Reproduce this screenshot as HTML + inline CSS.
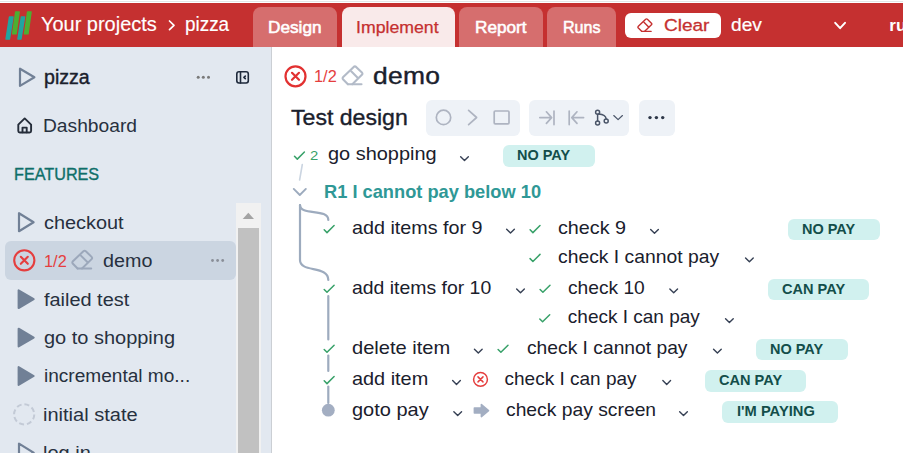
<!DOCTYPE html>
<html lang="en">
<head>
<meta charset="utf-8">
<title>pizza - demo</title>
<style>
html,body{margin:0;padding:0;background:#fff;}
#app{position:relative;width:903px;height:453px;overflow:hidden;background:#fff;font-family:"Liberation Sans",sans-serif;}
.t{position:absolute;white-space:pre;transform-origin:0 0;}
.b{position:absolute;box-sizing:border-box;}
#ico{position:absolute;left:0;top:0;}
.badge{background:#d1f1ef;border-radius:6px;}
.tool{background:#eef2f7;border-radius:6px;}
.tab{border-radius:8px 8px 0 0;background:#d66e6e;}

</style>
</head>
<body>
<div id="app">
<div class="b " style="left:0.00px;top:1.00px;width:903.00px;height:1.00px;background:#e3e6e6;"></div>
<div class="b " style="left:0.00px;top:3.00px;width:903.00px;height:43.60px;background:#c53030;"></div>
<div class="b tab" style="left:252.80px;top:6.80px;width:84.20px;height:39.80px;"></div>
<div class="b tab" style="left:342.00px;top:6.80px;width:113.00px;height:39.80px;background:#f9eaea;"></div>
<div class="b tab" style="left:459.00px;top:6.80px;width:84.00px;height:39.80px;"></div>
<div class="b tab" style="left:547.00px;top:6.80px;width:69.00px;height:39.80px;"></div>
<div class="b " style="left:625.00px;top:13.20px;width:96.00px;height:24.50px;background:#fff;border-radius:6px;"></div>
<div class="b " style="left:0.00px;top:46.60px;width:272.00px;height:406.40px;background:#e2e8f0;border-right:1px solid #cbcfd4;"></div>
<div class="b " style="left:5.00px;top:240.80px;width:231.00px;height:39.20px;background:#cbd5e1;border-radius:6px;"></div>
<div class="b " style="left:235.80px;top:203.00px;width:25.20px;height:250.00px;background:#f1f1f1;"></div>
<div class="b " style="left:238.00px;top:228.00px;width:21.00px;height:225.00px;background:#c1c1c1;"></div>
<div class="b tool" style="left:425.50px;top:100.00px;width:94.50px;height:35.60px;"></div>
<div class="b tool" style="left:529.00px;top:100.00px;width:99.80px;height:35.60px;"></div>
<div class="b tool" style="left:639.00px;top:100.00px;width:35.70px;height:35.60px;"></div>
<div class="b badge" style="left:502.90px;top:145.10px;width:92.20px;height:21.80px;"></div>
<div class="b badge" style="left:787.90px;top:219.10px;width:92.20px;height:20.70px;"></div>
<div class="b badge" style="left:768.00px;top:278.90px;width:101.20px;height:21.00px;"></div>
<div class="b badge" style="left:755.90px;top:339.10px;width:92.20px;height:20.70px;"></div>
<div class="b badge" style="left:704.90px;top:370.00px;width:101.00px;height:21.90px;"></div>
<div class="b badge" style="left:722.20px;top:401.00px;width:115.90px;height:21.60px;"></div>
<svg id="ico" width="903" height="453" viewBox="0 0 903 453">
<polygon points="242.7,219 254,219 248.35,212.8" fill="#a3a3a3"/>
<polygon points="9.50,16.90 13.00,16.90 9.50,39.00 6.00,39.00" fill="#20a5a0" stroke="#20a5a0" stroke-width="1.4" stroke-linejoin="round"/>
<polygon points="15.70,11.90 19.20,11.90 16.10,33.90 12.60,33.90" fill="#4caf32" stroke="#4caf32" stroke-width="1.4" stroke-linejoin="round"/>
<polygon points="21.40,16.90 24.60,16.90 21.00,39.00 17.90,39.00" fill="#20a5a0" stroke="#20a5a0" stroke-width="1.4" stroke-linejoin="round"/>
<polygon points="27.60,11.90 31.10,11.90 28.00,33.90 24.50,33.90" fill="#4caf32" stroke="#4caf32" stroke-width="1.4" stroke-linejoin="round"/>
<polyline points="169.5,21 174,25.3 169.5,29.6" stroke="#fff" stroke-width="1.7" fill="none" stroke-linecap="round" stroke-linejoin="round"/>
<g transform="translate(637.50,17.90) scale(0.7)" stroke="#c53030" stroke-width="2.00" fill="none" stroke-linecap="round" stroke-linejoin="round"><path d="M5.9 19.2 L1.2 14.4 Q0 13.2 1.2 12 L11.7 1.9 Q12.9 0.9 14.1 1.9 L19.9 7.6 Q21 8.7 19.9 9.8 L10.3 19.2"/><path d="M5.9 19.2 H19.5"/><path d="M9.2 6.3 L15.9 12.9"/></g>
<polyline points="835.2,22.8 840.1,28.2 845,22.8" stroke="#fff" stroke-width="2" fill="none" stroke-linecap="round" stroke-linejoin="round"/>
<polygon points="20.00,68.70 20.00,85.90 34.40,77.30" fill="none" stroke="#718096" stroke-width="2.2" stroke-linejoin="round"/>
<circle cx="198.2" cy="77.2" r="1.5" fill="#7a7a7a"/><circle cx="203.3" cy="77.2" r="1.5" fill="#7a7a7a"/><circle cx="208.5" cy="77.2" r="1.5" fill="#7a7a7a"/>
<g stroke="#1e293b" stroke-width="1.6" fill="none" stroke-linecap="round" stroke-linejoin="round"><rect x="236.8" y="71.8" width="11.5" height="11.2" rx="2.2"/><path d="M240.5 71.8 V83"/><path d="M245.3 76.1 L243.9 77.4 L245.3 78.7"/></g>
<g stroke="#252d3a" stroke-width="1.9" fill="none" stroke-linecap="round" stroke-linejoin="round"><path d="M18.3 124.6 L24.7 118.4 L31.1 124.6 V131 Q31.1 132.5 29.6 132.5 H19.8 Q18.3 132.5 18.3 131 Z"/><path d="M22.5 132.3 V127.6 H26.7 V132.3"/></g>
<polygon points="19.00,213.25 19.00,231.25 33.60,222.25" fill="none" stroke="#718096" stroke-width="2.2" stroke-linejoin="round"/>
<g stroke="#e53e3e" stroke-width="2.1" fill="none" stroke-linecap="round"><circle cx="24.3" cy="260.3" r="10.1"/><path d="M20.8 256.8 L27.8 263.8 M27.8 256.8 L20.8 263.8"/></g>
<g transform="translate(71.70,249.30) scale(1.0)" stroke="#9ca8bb" stroke-width="2.00" fill="none" stroke-linecap="round" stroke-linejoin="round"><path d="M5.9 19.2 L1.2 14.4 Q0 13.2 1.2 12 L11.7 1.9 Q12.9 0.9 14.1 1.9 L19.9 7.6 Q21 8.7 19.9 9.8 L10.3 19.2"/><path d="M5.9 19.2 H19.5"/><path d="M9.2 6.3 L15.9 12.9"/></g>
<circle cx="212.5" cy="260.5" r="1.4" fill="#8a8f98"/><circle cx="217.6" cy="260.5" r="1.4" fill="#8a8f98"/><circle cx="222.7" cy="260.5" r="1.4" fill="#8a8f98"/>
<polygon points="18.60,290.30 18.60,308.10 33.70,299.20" fill="#718096" stroke="#718096" stroke-width="2" stroke-linejoin="round"/>
<polygon points="18.60,328.70 18.60,346.50 33.70,337.60" fill="#718096" stroke="#718096" stroke-width="2" stroke-linejoin="round"/>
<polygon points="18.60,367.10 18.60,384.90 33.70,376.00" fill="#718096" stroke="#718096" stroke-width="2" stroke-linejoin="round"/>
<circle cx="24.15" cy="414.4" r="10.1" fill="none" stroke="#c3cad6" stroke-width="2" stroke-dasharray="5 2.93"/>
<polygon points="19.00,443.65 19.00,461.65 33.60,452.65" fill="none" stroke="#718096" stroke-width="2.2" stroke-linejoin="round"/>
<g stroke="#e23131" stroke-width="2.2" fill="none" stroke-linecap="round"><circle cx="295.5" cy="76.3" r="10"/><path d="M292.0 72.8 L299.0 79.8 M299.0 72.8 L292.0 79.8"/></g>
<g transform="translate(342.00,65.00) scale(1.0)" stroke="#b3bbc8" stroke-width="2.10" fill="none" stroke-linecap="round" stroke-linejoin="round"><path d="M5.9 19.2 L1.2 14.4 Q0 13.2 1.2 12 L11.7 1.9 Q12.9 0.9 14.1 1.9 L19.9 7.6 Q21 8.7 19.9 9.8 L10.3 19.2"/><path d="M5.9 19.2 H19.5"/><path d="M9.2 6.3 L15.9 12.9"/></g>
<g stroke="#aeb4c1" stroke-width="1.7" fill="none" stroke-linecap="round" stroke-linejoin="round"><circle cx="443.5" cy="117.4" r="7.2"/><polyline points="468.6,110.4 476.6,117.5 468.6,124.6"/><rect x="494.2" y="111" width="14.8" height="12.8" rx="1"/><path d="M539.8 117.6 H551.4 M546.4 111.8 L551.6 117.6 L546.4 123.4 M554 111 V124.6"/><path d="M583.6 117.6 H572 M577 111.8 L571.8 117.6 L577 123.4 M569.2 111 V124.6"/></g>
<g stroke="#4a5568" stroke-width="1.5" fill="none" stroke-linecap="round" stroke-linejoin="round"><circle cx="597.6" cy="112.3" r="2"/><circle cx="597.6" cy="123" r="2"/><circle cx="606.2" cy="121" r="2"/><path d="M597.6 114.3 V121 M598.6 114 Q605.8 114.5 606.2 119"/></g>
<polyline points="613.75,115.55 618.10,119.60 622.45,115.55" stroke="#4a5568" stroke-width="1.2" fill="none" stroke-linecap="round" stroke-linejoin="round"/>
<circle cx="650" cy="117.6" r="1.7" fill="#2d3748"/><circle cx="656.4" cy="117.6" r="1.7" fill="#2d3748"/><circle cx="662.7" cy="117.6" r="1.7" fill="#2d3748"/>
<polyline points="294.50,156.25 297.30,159.10 304.40,152.00" stroke="#38a169" stroke-width="1.5" fill="none" stroke-linecap="round" stroke-linejoin="round"/>
<polyline points="460.65,156.75 464.50,160.60 468.35,156.75" stroke="#364054" stroke-width="1.4" fill="none" stroke-linecap="round" stroke-linejoin="round"/>
<path d="M302.3 164.5 L299.6 180" stroke="#cbd5e1" stroke-width="1.6" fill="none" stroke-linecap="round"/>
<polyline points="293.75,188.95 299.80,195.00 305.85,188.95" stroke="#9dabbe" stroke-width="1.9" fill="none" stroke-linecap="round" stroke-linejoin="round"/>
<g stroke="#9dabbe" stroke-width="2.2" fill="none" stroke-linecap="round" stroke-linejoin="round"><path d="M300 205 V260 C300 273 328.3 265 328.3 280"/><path d="M300 205 C300 216 328.3 208 328.3 220"/><path d="M328.3 296 V339.5"/><path d="M328.3 355.5 V371"/><path d="M328.3 386.5 V403"/></g>
<circle cx="328.3" cy="410.2" r="6.4" fill="#a3aec2"/>
<polyline points="324.20,229.75 327.00,232.60 334.10,225.50" stroke="#38a169" stroke-width="1.5" fill="none" stroke-linecap="round" stroke-linejoin="round"/>
<polyline points="506.65,229.25 510.50,233.10 514.35,229.25" stroke="#364054" stroke-width="1.4" fill="none" stroke-linecap="round" stroke-linejoin="round"/>
<polyline points="530.10,229.75 532.90,232.60 540.00,225.50" stroke="#38a169" stroke-width="1.5" fill="none" stroke-linecap="round" stroke-linejoin="round"/>
<polyline points="650.65,229.45 654.50,233.30 658.35,229.45" stroke="#364054" stroke-width="1.4" fill="none" stroke-linecap="round" stroke-linejoin="round"/>
<polyline points="530.10,258.65 532.90,261.50 540.00,254.40" stroke="#38a169" stroke-width="1.5" fill="none" stroke-linecap="round" stroke-linejoin="round"/>
<polyline points="745.55,257.95 749.40,261.80 753.25,257.95" stroke="#364054" stroke-width="1.4" fill="none" stroke-linecap="round" stroke-linejoin="round"/>
<polyline points="324.20,289.45 327.00,292.30 334.10,285.20" stroke="#38a169" stroke-width="1.5" fill="none" stroke-linecap="round" stroke-linejoin="round"/>
<polyline points="516.65,288.95 520.50,292.80 524.35,288.95" stroke="#364054" stroke-width="1.4" fill="none" stroke-linecap="round" stroke-linejoin="round"/>
<polyline points="540.10,289.45 542.90,292.30 550.00,285.20" stroke="#38a169" stroke-width="1.5" fill="none" stroke-linecap="round" stroke-linejoin="round"/>
<polyline points="669.85,288.95 673.70,292.80 677.55,288.95" stroke="#364054" stroke-width="1.4" fill="none" stroke-linecap="round" stroke-linejoin="round"/>
<polyline points="539.80,318.95 542.60,321.80 549.70,314.70" stroke="#38a169" stroke-width="1.5" fill="none" stroke-linecap="round" stroke-linejoin="round"/>
<polyline points="725.55,318.65 729.40,322.50 733.25,318.65" stroke="#364054" stroke-width="1.4" fill="none" stroke-linecap="round" stroke-linejoin="round"/>
<polyline points="324.20,349.45 327.00,352.30 334.10,345.20" stroke="#38a169" stroke-width="1.5" fill="none" stroke-linecap="round" stroke-linejoin="round"/>
<polyline points="474.45,349.25 478.30,353.10 482.15,349.25" stroke="#364054" stroke-width="1.4" fill="none" stroke-linecap="round" stroke-linejoin="round"/>
<polyline points="498.10,349.45 500.90,352.30 508.00,345.20" stroke="#38a169" stroke-width="1.5" fill="none" stroke-linecap="round" stroke-linejoin="round"/>
<polyline points="713.55,349.25 717.40,353.10 721.25,349.25" stroke="#364054" stroke-width="1.4" fill="none" stroke-linecap="round" stroke-linejoin="round"/>
<polyline points="324.20,380.75 327.00,383.60 334.10,376.50" stroke="#38a169" stroke-width="1.5" fill="none" stroke-linecap="round" stroke-linejoin="round"/>
<polyline points="452.65,380.55 456.50,384.40 460.35,380.55" stroke="#364054" stroke-width="1.4" fill="none" stroke-linecap="round" stroke-linejoin="round"/>
<g stroke="#e53e3e" stroke-width="1.5" fill="none" stroke-linecap="round"><circle cx="480.5" cy="379.4" r="6.9"/><path d="M478.0 376.9 L483.0 381.9 M483.0 376.9 L478.0 381.9"/></g>
<polyline points="662.85,380.55 666.70,384.40 670.55,380.55" stroke="#364054" stroke-width="1.4" fill="none" stroke-linecap="round" stroke-linejoin="round"/>
<polyline points="453.85,411.75 457.70,415.60 461.55,411.75" stroke="#364054" stroke-width="1.4" fill="none" stroke-linecap="round" stroke-linejoin="round"/>
<path d="M474.4 408.1 H481.4 V404.6 L488.5 410.6 L481.4 416.6 V413 H474.4 Z" fill="#a3aec2" stroke="#a3aec2" stroke-width="1.6" stroke-linejoin="round"/>
<polyline points="679.65,411.75 683.50,415.60 687.35,411.75" stroke="#364054" stroke-width="1.4" fill="none" stroke-linecap="round" stroke-linejoin="round"/>
</svg>
<!-- text -->
<span class="t" style="left:40.82px;top:13px;font-size:19.4px;line-height:23px;letter-spacing:0.000px;color:#fff;transform:scaleX(1.0290);-webkit-text-stroke:0.15px #fff;">Your projects</span>
<span class="t" style="left:184.98px;top:13px;font-size:19.4px;line-height:23px;letter-spacing:0.000px;color:#fff;transform:scaleX(0.9746);-webkit-text-stroke:0.15px #fff;">pizza</span>
<span class="t" style="left:268.37px;top:17px;font-size:16.3px;line-height:20px;letter-spacing:0.000px;color:#fff;transform:scaleX(1.0567);-webkit-text-stroke:0.55px #fff;">Design</span>
<span class="t" style="left:356.48px;top:17px;font-size:16.5px;line-height:20px;letter-spacing:-0.000px;color:#c53030;transform:scaleX(1.0726);-webkit-text-stroke:0.25px #c53030;">Implement</span>
<span class="t" style="left:474.86px;top:17px;font-size:16.3px;line-height:20px;letter-spacing:0.000px;color:#fff;transform:scaleX(1.0549);-webkit-text-stroke:0.55px #fff;">Report</span>
<span class="t" style="left:562.79px;top:17px;font-size:16.3px;line-height:20px;letter-spacing:0.000px;color:#fff;transform:scaleX(0.9849);-webkit-text-stroke:0.55px #fff;">Runs</span>
<span class="t" style="left:664.15px;top:15px;font-size:17.4px;line-height:21px;letter-spacing:0.000px;color:#c53030;transform:scaleX(1.0936);-webkit-text-stroke:0.3px #c53030;">Clear</span>
<span class="t" style="left:730.85px;top:14px;font-size:18px;line-height:22px;letter-spacing:0.000px;color:#fff;transform:scaleX(1.0644);-webkit-text-stroke:0.2px #fff;">dev</span>
<span class="t" style="left:889.37px;top:15px;font-size:17.2px;line-height:21px;letter-spacing:0.000px;color:#fff;font-weight:700;">ru</span>
<span class="t" style="left:43.52px;top:66px;font-size:19.5px;line-height:23px;letter-spacing:0.000px;color:#1a202c;transform:scaleX(1.0048);-webkit-text-stroke:0.4px #1a202c;">pizza</span>
<span class="t" style="left:43.04px;top:115px;font-size:18.7px;line-height:22px;letter-spacing:0.000px;color:#27303e;transform:scaleX(1.0277);">Dashboard</span>
<span class="t" style="left:14.33px;top:164px;font-size:16.5px;line-height:20px;letter-spacing:0.000px;color:#0f6f69;transform:scaleX(0.9814);-webkit-text-stroke:0.35px #0f6f69;">FEATURES</span>
<span class="t" style="left:44.18px;top:212px;font-size:18.7px;line-height:22px;letter-spacing:0.000px;color:#27303e;transform:scaleX(1.0644);">checkout</span>
<span class="t" style="left:44.19px;top:252px;font-size:16.6px;line-height:20px;letter-spacing:0.000px;color:#e53e3e;transform:scaleX(0.9858);">1/2</span>
<span class="t" style="left:102.89px;top:250px;font-size:18.7px;line-height:22px;letter-spacing:-0.000px;color:#27303e;transform:scaleX(1.0559);">demo</span>
<span class="t" style="left:44.03px;top:289px;font-size:18.7px;line-height:22px;letter-spacing:0.000px;color:#27303e;transform:scaleX(1.0653);">failed test</span>
<span class="t" style="left:43.60px;top:327px;font-size:18.7px;line-height:22px;letter-spacing:0.000px;color:#27303e;transform:scaleX(1.0686);">go to shopping</span>
<span class="t" style="left:43.66px;top:365px;font-size:18.7px;line-height:22px;letter-spacing:0.000px;color:#27303e;transform:scaleX(1.0202);">incremental mo...</span>
<span class="t" style="left:42.95px;top:404px;font-size:18.7px;line-height:22px;letter-spacing:0.000px;color:#27303e;transform:scaleX(1.0717);">initial state</span>
<span class="t" style="left:43.05px;top:442px;font-size:18.7px;line-height:22px;letter-spacing:0.000px;color:#27303e;transform:scaleX(1.0696);">log in</span>
<span class="t" style="left:314.02px;top:67px;font-size:16px;line-height:19px;letter-spacing:0.000px;color:#e53e3e;transform:scaleX(1.0215);">1/2</span>
<span class="t" style="left:373.24px;top:61px;font-size:24px;line-height:29px;letter-spacing:0.245px;color:#1a202c;transform:scaleX(1.1000);-webkit-text-stroke:0.4px #1a202c;">demo</span>
<span class="t" style="left:290.96px;top:105px;font-size:21.6px;line-height:26px;letter-spacing:0.000px;color:#1a202c;transform:scaleX(1.0693);-webkit-text-stroke:0.35px #1a202c;">Test design</span>
<span class="t" style="left:310.11px;top:148px;font-size:13.5px;line-height:16px;letter-spacing:0.173px;color:#38a169;transform:scaleX(1.1000);">2</span>
<span class="t" style="left:327.56px;top:142px;font-size:19px;line-height:23px;letter-spacing:0.000px;color:#1a202c;transform:scaleX(1.0488);">go shopping</span>
<span class="t" style="left:324.20px;top:181px;font-size:18.4px;line-height:22px;letter-spacing:0.000px;color:#2f9896;transform:scaleX(0.9925);font-weight:700;">R1 I cannot pay below 10</span>
<span class="t" style="left:351.86px;top:216px;font-size:19px;line-height:23px;letter-spacing:-0.000px;color:#1a202c;transform:scaleX(1.0386);">add items for 9</span>
<span class="t" style="left:558.12px;top:216px;font-size:19px;line-height:23px;letter-spacing:0.000px;color:#1a202c;transform:scaleX(1.0392);">check 9</span>
<span class="t" style="left:558.45px;top:245px;font-size:19px;line-height:23px;letter-spacing:0.000px;color:#1a202c;transform:scaleX(1.0168);">check I cannot pay</span>
<span class="t" style="left:352.03px;top:276px;font-size:19px;line-height:23px;letter-spacing:0.000px;color:#1a202c;transform:scaleX(1.0218);">add items for 10</span>
<span class="t" style="left:567.92px;top:276px;font-size:19px;line-height:23px;letter-spacing:0.000px;color:#1a202c;transform:scaleX(1.0098);">check 10</span>
<span class="t" style="left:567.83px;top:305px;font-size:19px;line-height:23px;letter-spacing:0.000px;color:#1a202c;">check I can pay</span>
<span class="t" style="left:352.00px;top:336px;font-size:19px;line-height:23px;letter-spacing:0.000px;color:#1a202c;transform:scaleX(1.0565);">delete item</span>
<span class="t" style="left:526.63px;top:336px;font-size:19px;line-height:23px;letter-spacing:0.000px;color:#1a202c;transform:scaleX(1.0129);">check I cannot pay</span>
<span class="t" style="left:351.95px;top:367px;font-size:19px;line-height:23px;letter-spacing:0.000px;color:#1a202c;transform:scaleX(1.0458);">add item</span>
<span class="t" style="left:504.50px;top:367px;font-size:19px;line-height:23px;letter-spacing:0.000px;color:#1a202c;">check I can pay</span>
<span class="t" style="left:352.04px;top:398px;font-size:19px;line-height:23px;letter-spacing:0.000px;color:#1a202c;transform:scaleX(1.0518);">goto pay</span>
<span class="t" style="left:506.00px;top:398px;font-size:19px;line-height:23px;letter-spacing:0.000px;color:#1a202c;transform:scaleX(1.0151);">check pay screen</span>
<span class="t" style="left:516.87px;top:147px;font-size:14px;line-height:17px;letter-spacing:-0.000px;color:#134e4a;transform:scaleX(1.0336);font-weight:700;">NO PAY</span>
<span class="t" style="left:801.87px;top:221px;font-size:14px;line-height:17px;letter-spacing:-0.000px;color:#134e4a;transform:scaleX(1.0336);font-weight:700;">NO PAY</span>
<span class="t" style="left:782.15px;top:281px;font-size:14px;line-height:17px;letter-spacing:0.000px;color:#134e4a;transform:scaleX(1.0396);font-weight:700;">CAN PAY</span>
<span class="t" style="left:769.87px;top:341px;font-size:14px;line-height:17px;letter-spacing:-0.000px;color:#134e4a;transform:scaleX(1.0336);font-weight:700;">NO PAY</span>
<span class="t" style="left:719.27px;top:372px;font-size:14px;line-height:17px;letter-spacing:0.000px;color:#134e4a;transform:scaleX(1.0398);font-weight:700;">CAN PAY</span>
<span class="t" style="left:736.82px;top:403px;font-size:14px;line-height:17px;letter-spacing:0.000px;color:#134e4a;transform:scaleX(1.0497);font-weight:700;">I'M PAYING</span>
</div>
</body>
</html>
